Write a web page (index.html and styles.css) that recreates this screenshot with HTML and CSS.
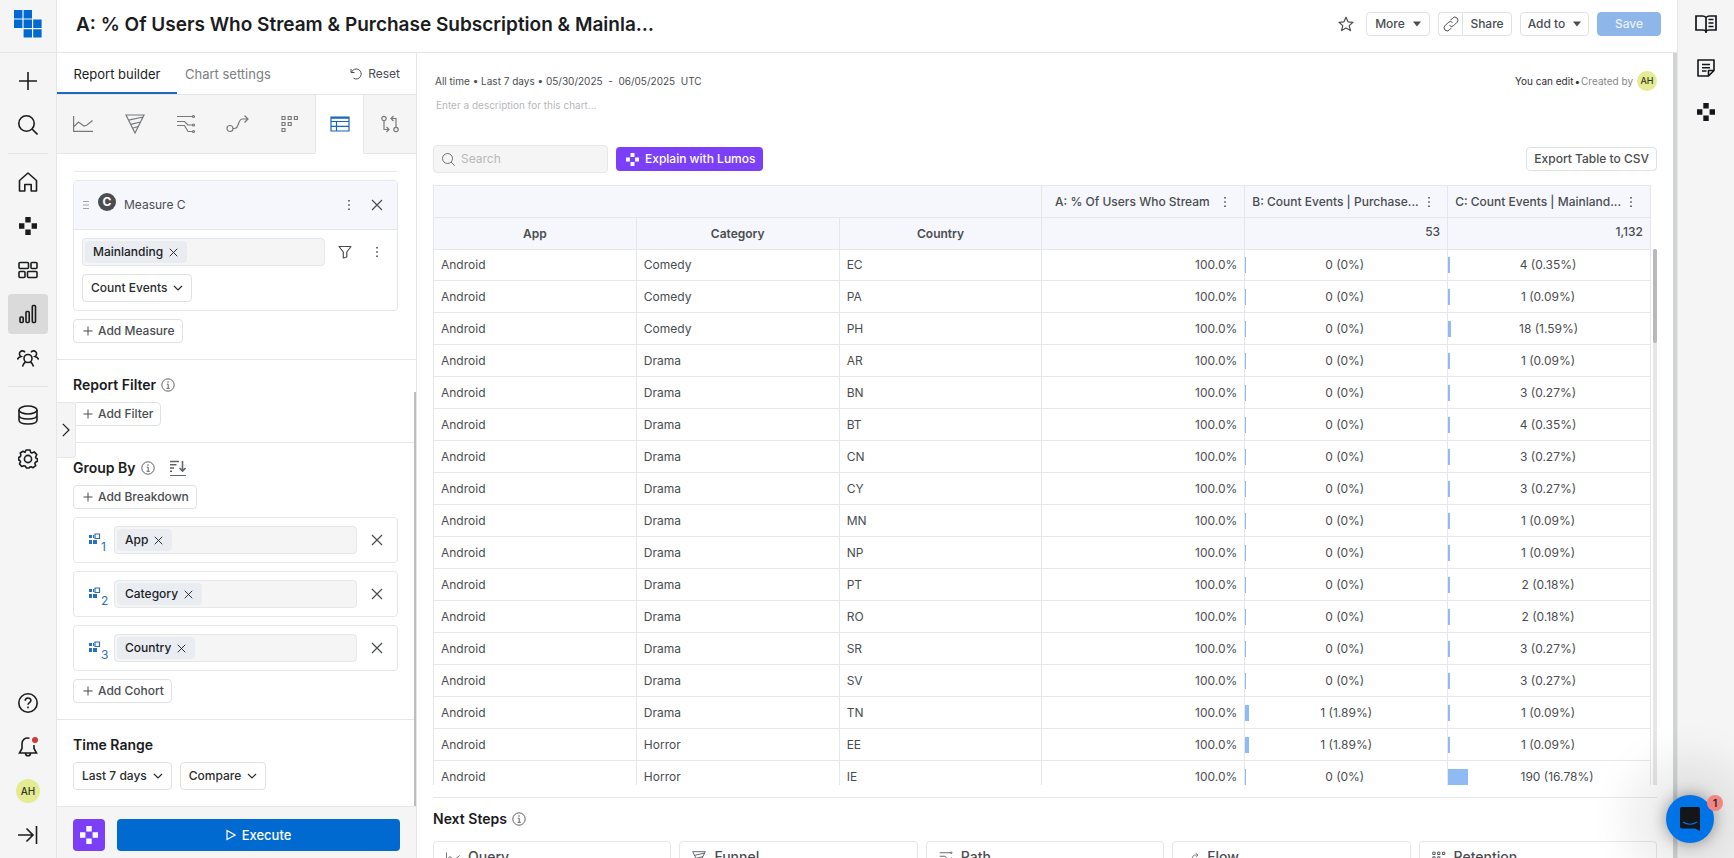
FILE: index.html
```html
<!DOCTYPE html>
<html lang="en">
<head>
    <meta charset="utf-8" />
    <title>Report builder</title>
    <link rel="stylesheet" href="styles.css">
</head>
<body>
    <!-- shared icons -->
    <svg class="sprite">
        <symbol id="i-x" viewBox="0 0 12 12"><path d="M1 1l10 10M11 1L1 11" /></symbol>
        <symbol id="i-plus" viewBox="0 0 10 10"><path d="M5 .5v9M.5 5h9" /></symbol>
        <symbol id="i-chev" viewBox="0 0 10 10"><path d="M1 3l4 4 4-4" /></symbol>
        <symbol id="i-caret" viewBox="0 0 8 6"><path d="M0 .5h8L4 5.5z" fill="currentColor" stroke="none" /></symbol>
        <symbol id="i-dots" viewBox="0 0 4 12"><path d="M1.2 1h1.6v1.6H1.2zM1.2 5.2h1.6v1.6H1.2zM1.2 9.4h1.6V11H1.2z" fill="currentColor" stroke="none" /></symbol>
        <symbol id="i-info" viewBox="0 0 14 14"><circle cx="7" cy="7" r="6.2" /><path d="M5.8 6.2h1.4v4M5.6 10.3h3.2" /><circle cx="7" cy="4" r=".8" fill="currentColor" stroke="none" /></symbol>
        <symbol id="i-search" viewBox="0 0 20 20"><circle cx="8.5" cy="8.5" r="7.7" /><path d="M14 14l5.5 5.5" /></symbol>
        <symbol id="i-lumos" viewBox="0 0 18 18"><path d="M6.3 0h5.4v5.4H6.3zM0 6.3h5.4v5.4H0zM12.6 6.3H18v5.4h-5.4zM6.3 12.6h5.4V18H6.3z" fill="currentColor" stroke="none" /></symbol>
        <symbol id="i-line" viewBox="0 0 20 20"><path d="M.6 2v15.4H20M1 12.500l4.500-4.500 5.500 4 3-1 5.500-4.500" /></symbol>
        <symbol id="i-funnel" viewBox="0 0 20 20"><path d="M1 1h18l-9 18zM3.600 6.200L18 3M5.800 10.400L15.500 8M7.600 14.300L13 12.500" /></symbol>
        <symbol id="i-path" viewBox="0 0 20 20"><path d="M1 2.500h16M1 7.500h7.500l3.500 3.500h5M1 11.500h7.500l3.500 6h5" /><circle cx="17.500" cy="2.500" r="1" /><circle cx="17.500" cy="11" r="1" /><circle cx="17.500" cy="17.500" r="1" /></symbol>
        <symbol id="i-flow" viewBox="0 0 24 20"><circle cx="4" cy="14.500" r="3" /><path d="M7 14.500h1.500c5 0 3-9.500 8-9.500H22M18.500 1.500L22 5l-3.500 3.500" /></symbol>
        <symbol id="i-retention" viewBox="0 0 18 18"><path d="M1 1.500h3v3H1zM7.200 1.500h3v3h-3zM13.400 1.500h3v3h-3zM1 7.500h3v3H1zM7.200 7.500h3v3h-3zM1 13.500h3v3H1z" /></symbol>
        <symbol id="i-prop" viewBox="0 0 12 12"><path d="M0 2h3v3H0zM0 7h3v4H0zM4 7h4v4H4zM4 2h1v3H4z" fill="currentColor" stroke="none" /><path d="M6 1h4.500v4.500H6z" /></symbol>
    </svg>

    <div class="app">
        <nav class="rail">
            <a class="logo" href="#" aria-label="Home page">
                <svg width="28" height="28" viewBox="0 0 28 28"><path d="M0 0h8.400v8.400H0zM9.600 0H18v8.400H9.600zM0 9.600h8.400V18H0zM9.600 9.600H18V18H9.600zM19.200 9.600h8.400V18h-8.400zM9.600 19.200H18v8.400H9.600zM19.200 19.200h8.400v8.400h-8.400z" fill="#006ad1" stroke="none" /></svg>
            </a>
            <div class="rail-items">
                <a class="rail-item" href="#" aria-label="New"><svg width="18" height="18" viewBox="0 0 18 18"><path d="M9 0v18M0 9h18" /></svg></a>
                <a class="rail-item" href="#" aria-label="Search"><svg width="20" height="20"><use href="#i-search" /></svg></a>
                <hr>
                <a class="rail-item" href="#" aria-label="Home"><svg width="20" height="20" viewBox="0 0 20 20"><path d="M1.500 8.500L10 1l8.500 7.500V19h-5.300v-6.500H6.800V19H1.500z" stroke-linejoin="round" /></svg></a>
                <a class="rail-item" href="#" aria-label="Lumos"><svg width="18" height="18"><use href="#i-lumos" /></svg></a>
                <a class="rail-item" href="#" aria-label="Dashboards"><svg width="20" height="18" viewBox="0 0 20 18"><rect x="1" y="1.500" width="9.500" height="6" rx="1" /><rect x="13" y="1.500" width="6" height="6" rx="1" /><rect x="1" y="10.500" width="6" height="6" rx="1" /><rect x="9.500" y="10.500" width="9.500" height="6" rx="1" /></svg></a>
                <a class="rail-item selected" href="#" aria-label="Reports"><svg width="18" height="20" viewBox="0 0 18 20"><rect x="1" y="13" width="3.200" height="5.500" rx="1" /><rect x="7" y="7.500" width="3.200" height="11" rx="1" /><rect x="13.300" y="1.500" width="3.200" height="17" rx="1" /></svg></a>
                <a class="rail-item" href="#" aria-label="Users"><svg width="22" height="18" viewBox="0 0 22 18"><circle cx="11" cy="9.500" r="4" /><path d="M5.500 17.500c.5-2.500 1.500-3.500 3-4.500M16.500 17.500c-.5-2.500-1.500-3.500-3-4.500M8 3.300A3 3 0 1 0 4 7.500C2 8 .8 9 .5 10.500M14 3.300a3 3 0 1 1 4 4.200c2 .5 3.200 1.500 3.500 3" /></svg></a>
                <hr>
                <a class="rail-item" href="#" aria-label="Data"><svg width="20" height="20" viewBox="0 0 20 20"><ellipse cx="10" cy="5" rx="9" ry="4" /><path d="M1 5v10c0 5.300 18 5.300 18 0V5M1 10c0 5.300 18 5.300 18 0" /></svg></a>
                <a class="rail-item" href="#" aria-label="Settings"><svg width="20" height="20" viewBox="0 0 20 20"><circle cx="10" cy="10" r="3.600" /><path d="M8 1h4l.7 2.400 1.300.6 2.200-1.100 2.600 2.700L17.600 8l.4 1.200 1.400.6v2.400l-2 1-.5 1.200.8 2.300-2.600 2-2-1-1.300.4L11 19H8.500l-1-1.700-1.600-.6-2.200.8-2.200-2.600 1-2-.6-1.400L.7 11V8.500l1.700-1 .5-1.400L2.200 4 5 2.300l2 1z" stroke-linejoin="round" /></svg></a>
            </div>
            <div class="rail-items rail-bottom">
                <a class="rail-item" href="#" aria-label="Help"><svg width="20" height="20" viewBox="0 0 20 20"><circle cx="10" cy="10" r="9.200" /><path d="M7.200 7.800c0-3.700 5.700-3.500 5.700-.3 0 2-2.900 2.200-2.900 4.300M10 13.600v1.700" /></svg></a>
                <a class="rail-item" href="#" aria-label="Notifications"><svg width="20" height="20" viewBox="0 0 20 20"><path d="M11.500 1.200C7 .2 4 3 4 7v4.500L1.500 16h17L16 11.500V8M7.500 16.500c.5 3 4.500 3 5 0" /><circle cx="17" cy="3" r="3" fill="#cc3b33" stroke="none" /></svg></a>
                <a class="rail-item" href="#" aria-label="Account"><span class="avatar">AH</span></a>
                <a class="rail-item" href="#" aria-label="Expand menu"><svg width="20" height="18" viewBox="0 0 20 18"><path d="M0 9h15M8.500 2.500L15 9l-6.500 6.500M18.500 0v18" /></svg></a>
            </div>
        </nav>

        <div class="center">
            <header class="topbar">
                <h1>A: % Of Users Who Stream &amp; Purchase Subscription &amp; Mainla…</h1>
                <div class="actions">
                    <a class="star" href="#" aria-label="Favorite"><svg width="16" height="16" viewBox="0 0 16 16"><path d="M8 1.200l2 4.600 5 .5-3.800 3.300 1.200 5L8 12l-4.400 2.600 1.200-5L1 6.300l5-.5z" stroke-linejoin="round" /></svg></a>
                    <button class="btn btn-more">More <svg width="8" height="6"><use href="#i-caret" /></svg></button>
                    <div class="share">
                        <button class="btn" aria-label="Copy link"><svg width="16" height="16" viewBox="0 0 16 16"><path d="M9.500 6.500a3 3 0 0 0-4.300 0L2 9.700a3 3 0 0 0 4.300 4.300l2.200-2.200M6.500 9.500a3 3 0 0 0 4.300 0L14 6.300A3 3 0 0 0 9.700 2L7.500 4.200" stroke-width="1" /></svg></button>
                        <button class="btn">Share</button>
                    </div>
                    <button class="btn btn-add">Add to <svg width="8" height="6"><use href="#i-caret" /></svg></button>
                    <button class="btn btn-save">Save</button>
                </div>
            </header>

            <div class="workspace">
                <aside class="builder">
                    <div class="tabs">
                        <button class="tab active">Report builder</button>
                        <button class="tab">Chart settings</button>
                        <button class="reset"><svg width="12" height="12" viewBox="0 0 12 12"><path d="M1 1v3.500h3.500M1.500 4.200A5 5 0 1 1 3.500 10.200" stroke-width="1" /></svg>Reset</button>
                    </div>
                    <div class="chart-types">
                        <button aria-label="Query"><svg width="20" height="20"><use href="#i-line" /></svg></button>
                        <button aria-label="Funnel"><svg width="20" height="20"><use href="#i-funnel" /></svg></button>
                        <button aria-label="Path"><svg width="20" height="20"><use href="#i-path" /></svg></button>
                        <button aria-label="Flow"><svg width="24" height="20"><use href="#i-flow" /></svg></button>
                        <button aria-label="Retention"><svg width="18" height="18"><use href="#i-retention" /></svg></button>
                        <button class="active" aria-label="Table"><svg width="20" height="16" viewBox="0 0 20 16"><path d="M1 1h18v14H1zM1 2.200h18M1 5.500h18M1 10.300h18M6.500 5.500V15" /></svg></button>
                        <button aria-label="Compare"><svg width="20" height="18" viewBox="0 0 20 18"><circle cx="4" cy="3.500" r="2.200" /><circle cx="16" cy="14.500" r="2.200" /><path d="M4 6v8.500h4.500M6.500 12l2.500 2.500L6.500 17M16 12V3.500h-4.500M13.500 1L11 3.500 13.500 6" /></svg></button>
                    </div>

                    <div class="builder-body">
                        <div class="card card-end"></div>
                        <div class="card measure">
                            <div class="measure-head">
                                <svg class="grip" width="6" height="10" viewBox="0 0 6 10"><path d="M0 1.500h6M0 5h6M0 8.500h6" /></svg>
                                <span class="letter">C</span>
                                <span class="measure-name">Measure C</span>
                                <svg class="dots" width="4" height="12"><use href="#i-dots" /></svg>
                                <button class="icon-btn" aria-label="Remove measure"><svg width="12" height="12"><use href="#i-x" /></svg></button>
                            </div>
                            <div class="measure-body">
                                <div class="field-row">
                                    <div class="field"><span class="chip">Mainlanding <svg width="9" height="9"><use href="#i-x" /></svg></span></div>
                                    <button class="icon-btn" aria-label="Filter"><svg width="14" height="14" viewBox="0 0 14 14"><path d="M1 1.500h12L8.800 7v5L5.300 13V7z" stroke-linejoin="round" /></svg></button>
                                    <button class="icon-btn" aria-label="Measure options"><svg width="4" height="12"><use href="#i-dots" /></svg></button>
                                </div>
                                <button class="btn drop">Count Events <svg width="10" height="10"><use href="#i-chev" /></svg></button>
                            </div>
                        </div>
                        <button class="btn add"><svg width="10" height="10"><use href="#i-plus" /></svg>Add Measure</button>

                        <section>
                            <h2>Report Filter <svg width="14" height="14"><use href="#i-info" /></svg></h2>
                            <button class="btn add"><svg width="10" height="10"><use href="#i-plus" /></svg>Add Filter</button>
                        </section>

                        <section>
                            <h2>Group By <svg width="14" height="14"><use href="#i-info" /></svg>
                                <svg class="sort" width="16" height="16" viewBox="0 0 16 16"><path d="M0 1.500h9M0 4.700h6.500M0 8h4M0 11.300h2M12.500 1v10M9.500 8l3 3 3-3" stroke-width="1.600" /><path d="M0 15.500h16" /></svg>
                            </h2>
                            <button class="btn add"><svg width="10" height="10"><use href="#i-plus" /></svg>Add Breakdown</button>
                            <div class="card group">
                                <span class="prop"><svg width="12" height="12"><use href="#i-prop" /></svg><sub>1</sub></span>
                                <div class="field"><span class="chip">App <svg width="9" height="9"><use href="#i-x" /></svg></span></div>
                                <button class="icon-btn" aria-label="Remove App"><svg width="12" height="12"><use href="#i-x" /></svg></button>
                            </div>
                            <div class="card group">
                                <span class="prop"><svg width="12" height="12"><use href="#i-prop" /></svg><sub>2</sub></span>
                                <div class="field"><span class="chip">Category <svg width="9" height="9"><use href="#i-x" /></svg></span></div>
                                <button class="icon-btn" aria-label="Remove Category"><svg width="12" height="12"><use href="#i-x" /></svg></button>
                            </div>
                            <div class="card group">
                                <span class="prop"><svg width="12" height="12"><use href="#i-prop" /></svg><sub>3</sub></span>
                                <div class="field"><span class="chip">Country <svg width="9" height="9"><use href="#i-x" /></svg></span></div>
                                <button class="icon-btn" aria-label="Remove Country"><svg width="12" height="12"><use href="#i-x" /></svg></button>
                            </div>
                            <button class="btn add"><svg width="10" height="10"><use href="#i-plus" /></svg>Add Cohort</button>
                        </section>

                        <section>
                            <h2>Time Range</h2>
                            <div class="time-row">
                                <button class="btn drop">Last 7 days <svg width="10" height="10"><use href="#i-chev" /></svg></button>
                                <button class="btn drop">Compare <svg width="10" height="10"><use href="#i-chev" /></svg></button>
                            </div>
                        </section>
                    </div>

                    <div class="builder-foot">
                        <button class="lumos-btn" aria-label="Lumos"><svg width="18" height="18"><use href="#i-lumos" /></svg></button>
                        <button class="execute"><svg width="10" height="12" viewBox="0 0 10 12"><path d="M1 1.500l8 4.500-8 4.500z" /></svg>Execute</button>
                    </div>
                    <div class="builder-scroll"></div>
                    <button class="handle" aria-label="Expand panel"><svg width="8" height="14" viewBox="0 0 8 14"><path d="M.8 .8L7 7 .8 13.200" /></svg></button>
                </aside>

                <main class="report">
                    <div class="meta">
                        <span class="range">All time • Last 7 days • 05/30/2025&nbsp; - &nbsp;06/05/2025&nbsp; UTC</span>
                        <span class="owner">You can edit <b>•</b> <i>Created by</i> <span class="avatar small">AH</span></span>
                    </div>
                    <input class="description" type="text" aria-label="Description" placeholder="Enter a description for this chart...">

                    <div class="table-tools">
                        <label class="search"><svg width="13" height="13"><use href="#i-search" /></svg><input type="text" aria-label="Search" placeholder="Search"></label>
                        <button class="explain"><svg width="13" height="13"><use href="#i-lumos" /></svg>Explain with Lumos</button>
                        <button class="btn export">Export Table to CSV</button>
                    </div>

                    <div class="table-wrap">
                        <table>
                            <thead>
                                <tr>
                                    <th colspan="3"></th>
                                    <th><div class="th-measure"><span>A: % Of Users Who Stream</span><svg width="4" height="12"><use href="#i-dots" /></svg></div></th>
                                    <th><div class="th-measure"><span>B: Count Events | Purchase...</span><svg width="4" height="12"><use href="#i-dots" /></svg></div></th>
                                    <th><div class="th-measure"><span>C: Count Events | Mainland...</span><svg width="4" height="12"><use href="#i-dots" /></svg></div></th>
                                </tr>
                                <tr>
                                    <th>App</th><th>Category</th><th>Country</th><th></th><th class="total">53</th><th class="total">1,132</th>
                                </tr>
                            </thead>
                            <tbody id="rows"></tbody>
                        </table>
                        <div class="table-scroll"><div></div></div>
                    </div>

                    <section class="next">
                        <h2>Next Steps <svg width="14" height="14"><use href="#i-info" /></svg></h2>
                        <div class="next-cards">
                            <a href="#"><svg width="14" height="14"><use href="#i-line" /></svg>Query</a>
                            <a href="#"><svg width="14" height="14"><use href="#i-funnel" /></svg>Funnel</a>
                            <a href="#"><svg width="14" height="14"><use href="#i-path" /></svg>Path</a>
                            <a href="#"><svg width="14" height="14"><use href="#i-flow" /></svg>Flow</a>
                            <a href="#"><svg width="14" height="14"><use href="#i-retention" /></svg>Retention</a>
                        </div>
                    </section>
                    <div class="report-scroll"></div>
                </main>
            </div>
        </div>

        <aside class="right-rail">
            <a href="#" aria-label="Docs"><svg width="22" height="18" viewBox="0 0 22 18"><path d="M11 2.500C10 1.500 9 1 7.500 1H1v14h7c1.500 0 2.500.5 3 1.500.5-1 1.500-1.500 3-1.500h7V1h-6.500C13 1 12 1.500 11 2.500v15.500M13.500 4.500h5M13.500 8h5M13.500 11.500h5" stroke-width="1.700" /></svg></a>
            <a href="#" aria-label="Notes"><svg width="18" height="18" viewBox="0 0 18 18"><path d="M1 1h16v10.500L11.500 17H1zM17 11.500h-5.500V17M5 5.500h8M5 8.700h8M5 12h4.500" stroke-width="1.600" stroke-linejoin="round" /></svg></a>
            <a href="#" aria-label="Lumos"><svg width="18" height="18"><use href="#i-lumos" /></svg></a>
        </aside>
    </div>

    <button class="chat" aria-label="Open chat">
        <svg width="22" height="26" viewBox="0 0 22 26"><path d="M3 1h16a2 2 0 0 1 2 2v22l-5-2.500H3a2 2 0 0 1-2-2V3a2 2 0 0 1 2-2z" fill="#14161a" stroke="none" /><path d="M4 16c4 3 10 3 14 0" stroke="#0073e6" /></svg>
        <span class="badge">1</span>
    </button>

    <script src="script.js"></script>
</body>
</html>
```
FILE: styles.css
```css
* {
    box-sizing: border-box;
}

html, body {
    height: 100%;
    margin: 0;
    overflow: hidden;
}

body, button, input {
    font-family: Inter, "Liberation Sans", sans-serif;
    font-size: 12px;
    line-height: 16px;
    color: #4a4d50;
}

button {
    cursor: pointer;
    padding: 0;
    border: 0;
    background: none;
}

a {
    color: inherit;
    text-decoration: none;
}

svg {
    flex-shrink: 0;
    fill: none;
    stroke: currentColor;
    stroke-width: 1.2;
}

h1, h2 {
    margin: 0;
    color: #1b1c1e;
    font-weight: 600;
}

h2 {
    display: flex;
    align-items: center;
    gap: 5px;
    font-size: 14px;
    line-height: 20px;
}

h2 svg {
    color: #606468;
    stroke-width: 1;
}

.sprite {
    display: none;
}

.app {
    display: flex;
    height: 100%;
}

/* left navigation */
.rail {
    width: 57px;
    flex-shrink: 0;
    display: flex;
    flex-direction: column;
    background: #f5f5f5;
    border-right: 1px solid #e6e6e8;
    color: #1b1c1e;
}

.rail svg {
    stroke-width: 1.6;
}

.logo {
    height: 53px;
    display: flex;
    justify-content: center;
    padding-top: 10px;
    border-bottom: 1px solid #e6e6e8;
}

.rail-items {
    display: flex;
    flex-direction: column;
    align-items: center;
    gap: 4px;
    padding-top: 8px;
}

.rail-items hr {
    width: 40px;
    margin: 4px 0;
    border: 0;
    border-top: 1px solid #e3e3e5;
}

.rail-item {
    width: 40px;
    height: 40px;
    display: flex;
    align-items: center;
    justify-content: center;
    border-radius: 4px;
}

.rail-item.selected {
    background: #dadadb;
}

.rail-bottom {
    margin-top: auto;
    padding-bottom: 3px;
}

.avatar {
    width: 24px;
    height: 24px;
    display: inline-flex;
    align-items: center;
    justify-content: center;
    border-radius: 50%;
    background: #e4eb93;
    color: #33361c;
    font-size: 10px;
    font-weight: 500;
}

.avatar.small {
    width: 20px;
    height: 20px;
    margin-left: 3px;
    font-size: 9px;
}

/* header */
.center {
    flex: 1;
    min-width: 0;
    display: flex;
    flex-direction: column;
}

.topbar {
    height: 53px;
    flex-shrink: 0;
    display: flex;
    align-items: center;
    justify-content: space-between;
    padding: 0 16px 4px 19px;
    border-bottom: 1px solid #e6e6e8;
}

h1 {
    padding-top: 2px;
    font-size: 19px;
    line-height: 28px;
}

.actions {
    display: flex;
    align-items: center;
    gap: 8px;
}

.star {
    display: flex;
    margin-right: 4px;
}

.btn {
    height: 24px;
    display: flex;
    align-items: center;
    justify-content: center;
    gap: 8px;
    padding: 0 7px;
    background: #fff;
    border: 1px solid #e0e1e3;
    border-radius: 4px;
    font-weight: 500;
    white-space: nowrap;
}

.btn-more {
    width: 64px;
}

.share {
    display: flex;
}

.share .btn:first-child {
    width: 24px;
    padding: 0;
    border-right: 0;
    border-radius: 4px 0 0 4px;
}

.share .btn:last-child {
    width: 50px;
    border-radius: 0 4px 4px 0;
}

.btn-add {
    width: 69px;
}

.btn-save {
    width: 64px;
    background: #8fb6e8;
    border-color: #8fb6e8;
    color: #e8f1fc;
}

.workspace {
    flex: 1;
    min-height: 0;
    display: flex;
}

/* report builder */
.builder {
    position: relative;
    width: 360px;
    flex-shrink: 0;
    display: flex;
    flex-direction: column;
    border-right: 1px solid #e6e6e8;
}

.tabs {
    height: 41px;
    flex-shrink: 0;
    display: flex;
}

.tab {
    padding: 0 8px;
    font-size: 13px;
    color: #7b7e82;
}

.tab.active {
    width: 120px;
    color: #1b1c1e;
    border-bottom: 2px solid #1f69b8;
    padding-top: 2px;
}

.reset {
    display: flex;
    align-items: center;
    gap: 6px;
    margin-left: auto;
    padding-right: 16px;
}

.chart-types {
    height: 60px;
    flex-shrink: 0;
    display: flex;
    background: #f5f5f5;
}

.chart-types button {
    flex: 1;
    display: flex;
    align-items: center;
    justify-content: center;
    color: #77797c;
    border-top: 1px solid #e6e6e8;
    border-bottom: 1px solid #e6e6e8;
}

.chart-types button.active {
    flex: 0 0 49px;
    background: #fff;
    color: #1765bd;
    border: 1px solid #e6e6e8;
    border-bottom-color: #fff;
}

.builder-body {
    flex: 1;
    min-height: 0;
    padding: 0 18px 0 16px;
    overflow: hidden;
}

.card {
    border: 1px solid #e6e7e9;
    border-radius: 4px;
}

.card-end {
    height: 18px;
    border-top: 0;
    border-color: #fff #fff #e6e7e9;
}

.measure {
    margin: 8px 0;
}

.measure-head {
    height: 49px;
    display: flex;
    align-items: center;
    padding: 0 13px 0 9px;
    background: #f6f7fd;
    border-bottom: 1px solid #e6e7e9;
}

.grip {
    color: #a0a2a5;
}

.letter {
    width: 18px;
    height: 18px;
    margin: 0 8px 6px 9px;
    border-radius: 50%;
    background: #4c4d4f;
    color: #fff;
    font-weight: 700;
    line-height: 18px;
    text-align: center;
}

.dots {
    margin: 0 19px 0 auto;
}

.measure-body {
    padding: 8px;
}

.field-row {
    display: flex;
    align-items: center;
    margin-bottom: 8px;
}

.field {
    flex: 1;
    height: 28px;
    padding: 2px;
    background: #f5f5f5;
    border: 1px solid #e6e7e9;
    border-radius: 4px;
}

.chip {
    width: max-content;
    height: 22px;
    display: flex;
    align-items: center;
    gap: 6px;
    padding: 0 9px 0 8px;
    background: #e9edf2;
    border-radius: 4px;
    color: #1b1c1e;
    font-weight: 500;
}

.icon-btn {
    width: 14px;
    display: flex;
    justify-content: center;
}

.field-row .icon-btn {
    margin-left: 13px;
    margin-right: 5px;
}

.drop {
    height: 28px;
    gap: 6px;
    padding: 0 8px;
    color: #2b2d30;
}

.add {
    gap: 5px;
    padding: 0 7px 0 9px;
}

.add svg {
    stroke-width: 1;
}

.builder section {
    margin: 16px -18px 0 -16px;
    padding: 15px 18px 0 16px;
    border-top: 1px solid #e6e7e9;
}

.builder h2 {
    margin-bottom: 7px;
}

.sort {
    margin-left: 10px;
}

.group {
    height: 46px;
    display: flex;
    align-items: center;
    margin: 8px 0;
    padding: 0 13px 0 15px;
}

.prop {
    width: 25px;
    flex-shrink: 0;
    display: flex;
    padding-top: 6px;
    color: #2a6fbf;
}

.prop sub {
    font-size: 12px;
    line-height: 12px;
    padding-top: 8px;
}

.group .icon-btn {
    margin-left: 13px;
}

.time-row {
    display: flex;
    gap: 8px;
}

.builder-foot {
    height: 52px;
    flex-shrink: 0;
    display: flex;
    gap: 12px;
    padding: 12px 16px 0;
    background: #f5f5f5;
    border-top: 1px solid #e6e7e9;
}

.lumos-btn, .execute {
    height: 32px;
    display: flex;
    align-items: center;
    justify-content: center;
    border-radius: 4px;
    color: #fff;
}

.lumos-btn {
    width: 32px;
    background: #7b3ff8;
}

.execute {
    flex: 1;
    gap: 6px;
    background: #006ad1;
    font-size: 13px;
    font-weight: 500;
}

.builder-scroll {
    position: absolute;
    right: 0;
    bottom: 52px;
    width: 2px;
    height: 414px;
    background: #bcbdbf;
}

.handle {
    position: absolute;
    left: 0;
    top: 349px;
    width: 19px;
    height: 56px;
    display: flex;
    align-items: center;
    justify-content: center;
    background: #f5f5f5;
    border: 1px solid #e6e7e9;
    border-left: 0;
    border-radius: 0 4px 4px 0;
    color: #1b1c1e;
}

/* report */
.report {
    position: relative;
    flex: 1;
    min-width: 0;
    padding: 18px 20px 0 16px;
    overflow: hidden;
}

.meta {
    height: 20px;
    display: flex;
    align-items: center;
    justify-content: space-between;
    padding-left: 2px;
    font-size: 10px;
}

.owner {
    display: flex;
    align-items: center;
    gap: 1px;
    color: #2b2d30;
}

.owner b {
    font-weight: 400;
}

.owner i {
    font-style: normal;
    color: #85878a;
}

.description {
    display: block;
    width: 100%;
    height: 16px;
    margin-top: 6px;
    padding: 0 3px;
    border: 0;
    font-size: 10px;
}

::placeholder {
    color: #b6b8ba;
    opacity: 1;
}

.table-tools {
    display: flex;
    align-items: center;
    gap: 8px;
    margin: 32px 0 12px;
}

.search {
    width: 175px;
    height: 28px;
    display: flex;
    align-items: center;
    gap: 6px;
    padding: 0 8px;
    background: #f5f5f5;
    border: 1px solid #e6e7e9;
    border-radius: 4px;
}

.search input {
    width: 100%;
    padding: 0;
    border: 0;
    background: none;
}

.explain {
    height: 24px;
    display: flex;
    align-items: center;
    gap: 6px;
    padding: 0 8px 0 10px;
    border-radius: 4px;
    background: #7b3ff8;
    color: #fff;
    font-weight: 500;
}

.export {
    margin-left: auto;
}

.table-wrap {
    position: relative;
    height: calc(100vh - 258px);
    padding-right: 6px;
    overflow: hidden;
}

table {
    width: 100%;
    table-layout: fixed;
    border-collapse: collapse;
}

th, td {
    height: 32px;
    padding: 0 7px;
    border: 1px solid #e6e7ea;
    text-align: left;
    font-weight: 400;
}

tbody tr:first-child td {
    height: 31px;
}

th {
    background: #f6f7fd;
    font-weight: 600;
    text-align: center;
}

th.total {
    text-align: right;
    font-weight: 500;
    padding-bottom: 4px;
}

.th-measure {
    display: flex;
    align-items: center;
    gap: 8px;
    padding-right: 10px;
    font-weight: 500;
    white-space: nowrap;
}

.th-measure span {
    flex: 1;
}

td.percent {
    text-align: right;
}

td.bar-cell {
    padding: 0;
}

.bar-row {
    display: flex;
    align-items: center;
}

.bar {
    height: 16px;
    background: #8fbbf5;
}

.bar-row span {
    flex: 1;
    padding-right: 4px;
    text-align: center;
}

.table-scroll {
    position: absolute;
    top: 64px;
    right: 0;
    bottom: 0;
    width: 4px;
    background: #e6e6e6;
}

.table-scroll div {
    height: 94px;
    background: #b9b9b9;
    border-radius: 2px;
}

.next {
    margin-top: 12px;
    padding-top: 11px;
    border-top: 1px solid #e6e7e9;
}

.next-cards {
    display: grid;
    grid-template-columns: repeat(5, 1fr);
    gap: 8px;
    margin-top: 12px;
}

.next-cards a {
    height: 80px;
    display: flex;
    align-items: flex-start;
    gap: 8px;
    padding: 7px 12px;
    border: 1px solid #e6e7e9;
    border-radius: 4px;
    font-size: 14px;
    font-weight: 500;
}

.next-cards svg {
    margin-top: 2px;
}

.report-scroll {
    position: absolute;
    top: 0;
    right: 0;
    bottom: 0;
    width: 4px;
    background: #d2d4d5;
}

/* right side */
.right-rail {
    width: 57px;
    flex-shrink: 0;
    display: flex;
    flex-direction: column;
    align-items: center;
    gap: 26px;
    padding-top: 15px;
    background: #f5f5f5;
    border-left: 1px solid #e6e6e8;
    color: #14161a;
}

.right-rail a {
    display: flex;
}

.chat {
    position: absolute;
    right: 20px;
    bottom: 15px;
    width: 48px;
    height: 48px;
    display: flex;
    align-items: center;
    justify-content: center;
    border-radius: 50%;
    background: #0073e6;
    box-shadow: 0 0 16px rgba(0, 0, 0, 0.4), 0 0 40px 40px rgba(0, 0, 0, 0.07);
}

.badge {
    position: absolute;
    top: 0;
    right: -9px;
    width: 16px;
    height: 16px;
    border-radius: 50%;
    background: #f28482;
    color: #1b1c1e;
    font-size: 11px;
    font-weight: 500;
}
```
FILE: script.js
```js
// app, category, country, A, B count, B %, C count, C %
var rows = [
    ["Android", "Comedy", "EC", "100.0%", 0, 0, 4, 0.35],
    ["Android", "Comedy", "PA", "100.0%", 0, 0, 1, 0.09],
    ["Android", "Comedy", "PH", "100.0%", 0, 0, 18, 1.59],
    ["Android", "Drama", "AR", "100.0%", 0, 0, 1, 0.09],
    ["Android", "Drama", "BN", "100.0%", 0, 0, 3, 0.27],
    ["Android", "Drama", "BT", "100.0%", 0, 0, 4, 0.35],
    ["Android", "Drama", "CN", "100.0%", 0, 0, 3, 0.27],
    ["Android", "Drama", "CY", "100.0%", 0, 0, 3, 0.27],
    ["Android", "Drama", "MN", "100.0%", 0, 0, 1, 0.09],
    ["Android", "Drama", "NP", "100.0%", 0, 0, 1, 0.09],
    ["Android", "Drama", "PT", "100.0%", 0, 0, 2, 0.18],
    ["Android", "Drama", "RO", "100.0%", 0, 0, 2, 0.18],
    ["Android", "Drama", "SR", "100.0%", 0, 0, 3, 0.27],
    ["Android", "Drama", "SV", "100.0%", 0, 0, 3, 0.27],
    ["Android", "Drama", "TN", "100.0%", 1, 1.89, 1, 0.09],
    ["Android", "Horror", "EE", "100.0%", 1, 1.89, 1, 0.09],
    ["Android", "Horror", "IE", "100.0%", 0, 0, 190, 16.78]
];

function barCell(count, percent) {
    // empty bars still show a 1px line
    var width = Math.ceil(percent * 1.1) + 1;
    return `<td class="bar-cell"><div class="bar-row"><div class="bar" style="width: ${width}px"></div><span>${count} (${percent}%)</span></div></td>`;
}

document.getElementById("rows").innerHTML = rows.map(function (r) {
    return `<tr><td>${r[0]}</td><td>${r[1]}</td><td>${r[2]}</td><td class="percent">${r[3]}</td>${barCell(r[4], r[5])}${barCell(r[6], r[7])}</tr>`;
}).join("");
```
